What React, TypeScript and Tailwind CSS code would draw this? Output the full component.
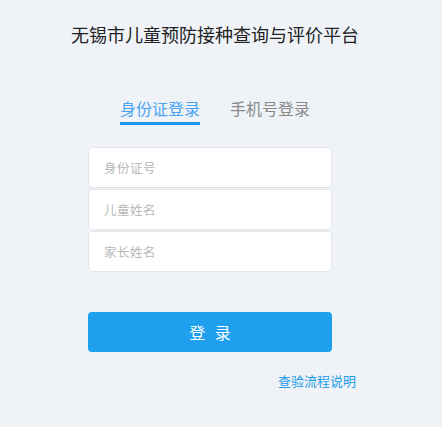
export default function App() {
  const fields = ['身份证号', '儿童姓名', '家长姓名'];

  return (
    <div
      className="h-[427px] w-full bg-[#eff3f8] overflow-hidden"
      style={{ fontFamily: '"Noto Sans CJK SC", "Noto Sans", sans-serif' }}
    >
      <h1 className="mt-[20px] h-[28px] pl-[71px] text-[18px] leading-[28px] text-[#222]">
        无锡市儿童预防接种查询与评价平台
      </h1>

      <div className="mt-[48px] flex gap-[30px] pl-[120px]">
        <div className="w-[80px] border-b-[3px] border-[#2196ee] pb-[2px] text-center text-[16px] leading-[24px] text-[#4aa3f0]">
          身份证登录
        </div>
        <div className="w-[80px] pb-[5px] text-center text-[16px] leading-[24px] text-[#8a8a8a]">
          手机号登录
        </div>
      </div>

      <div className="ml-[88px] mt-[22px] w-[244px]">
        <div className="flex flex-col gap-[1px]">
          {fields.map((f) => (
            <div
              key={f}
              className="flex h-[41px] items-center rounded-[4px] border border-[#e3e7ec] bg-white pl-[15px] pt-[1px] text-[12.5px] tracking-[0.5px] text-[#b8b8b8]"
            >
              {f}
            </div>
          ))}
        </div>

        <button className="mt-[40px] flex h-[40px] w-full items-center justify-center rounded-[4px] bg-[#1ea0ef] pl-[3px] text-[16px] tracking-[3px] text-white">
          登 录
        </button>
      </div>

      <div className="mt-[19px] pl-[278px] text-[13px] leading-[20px] text-[#1e9be8]">
        查验流程说明
      </div>
    </div>
  );
}
